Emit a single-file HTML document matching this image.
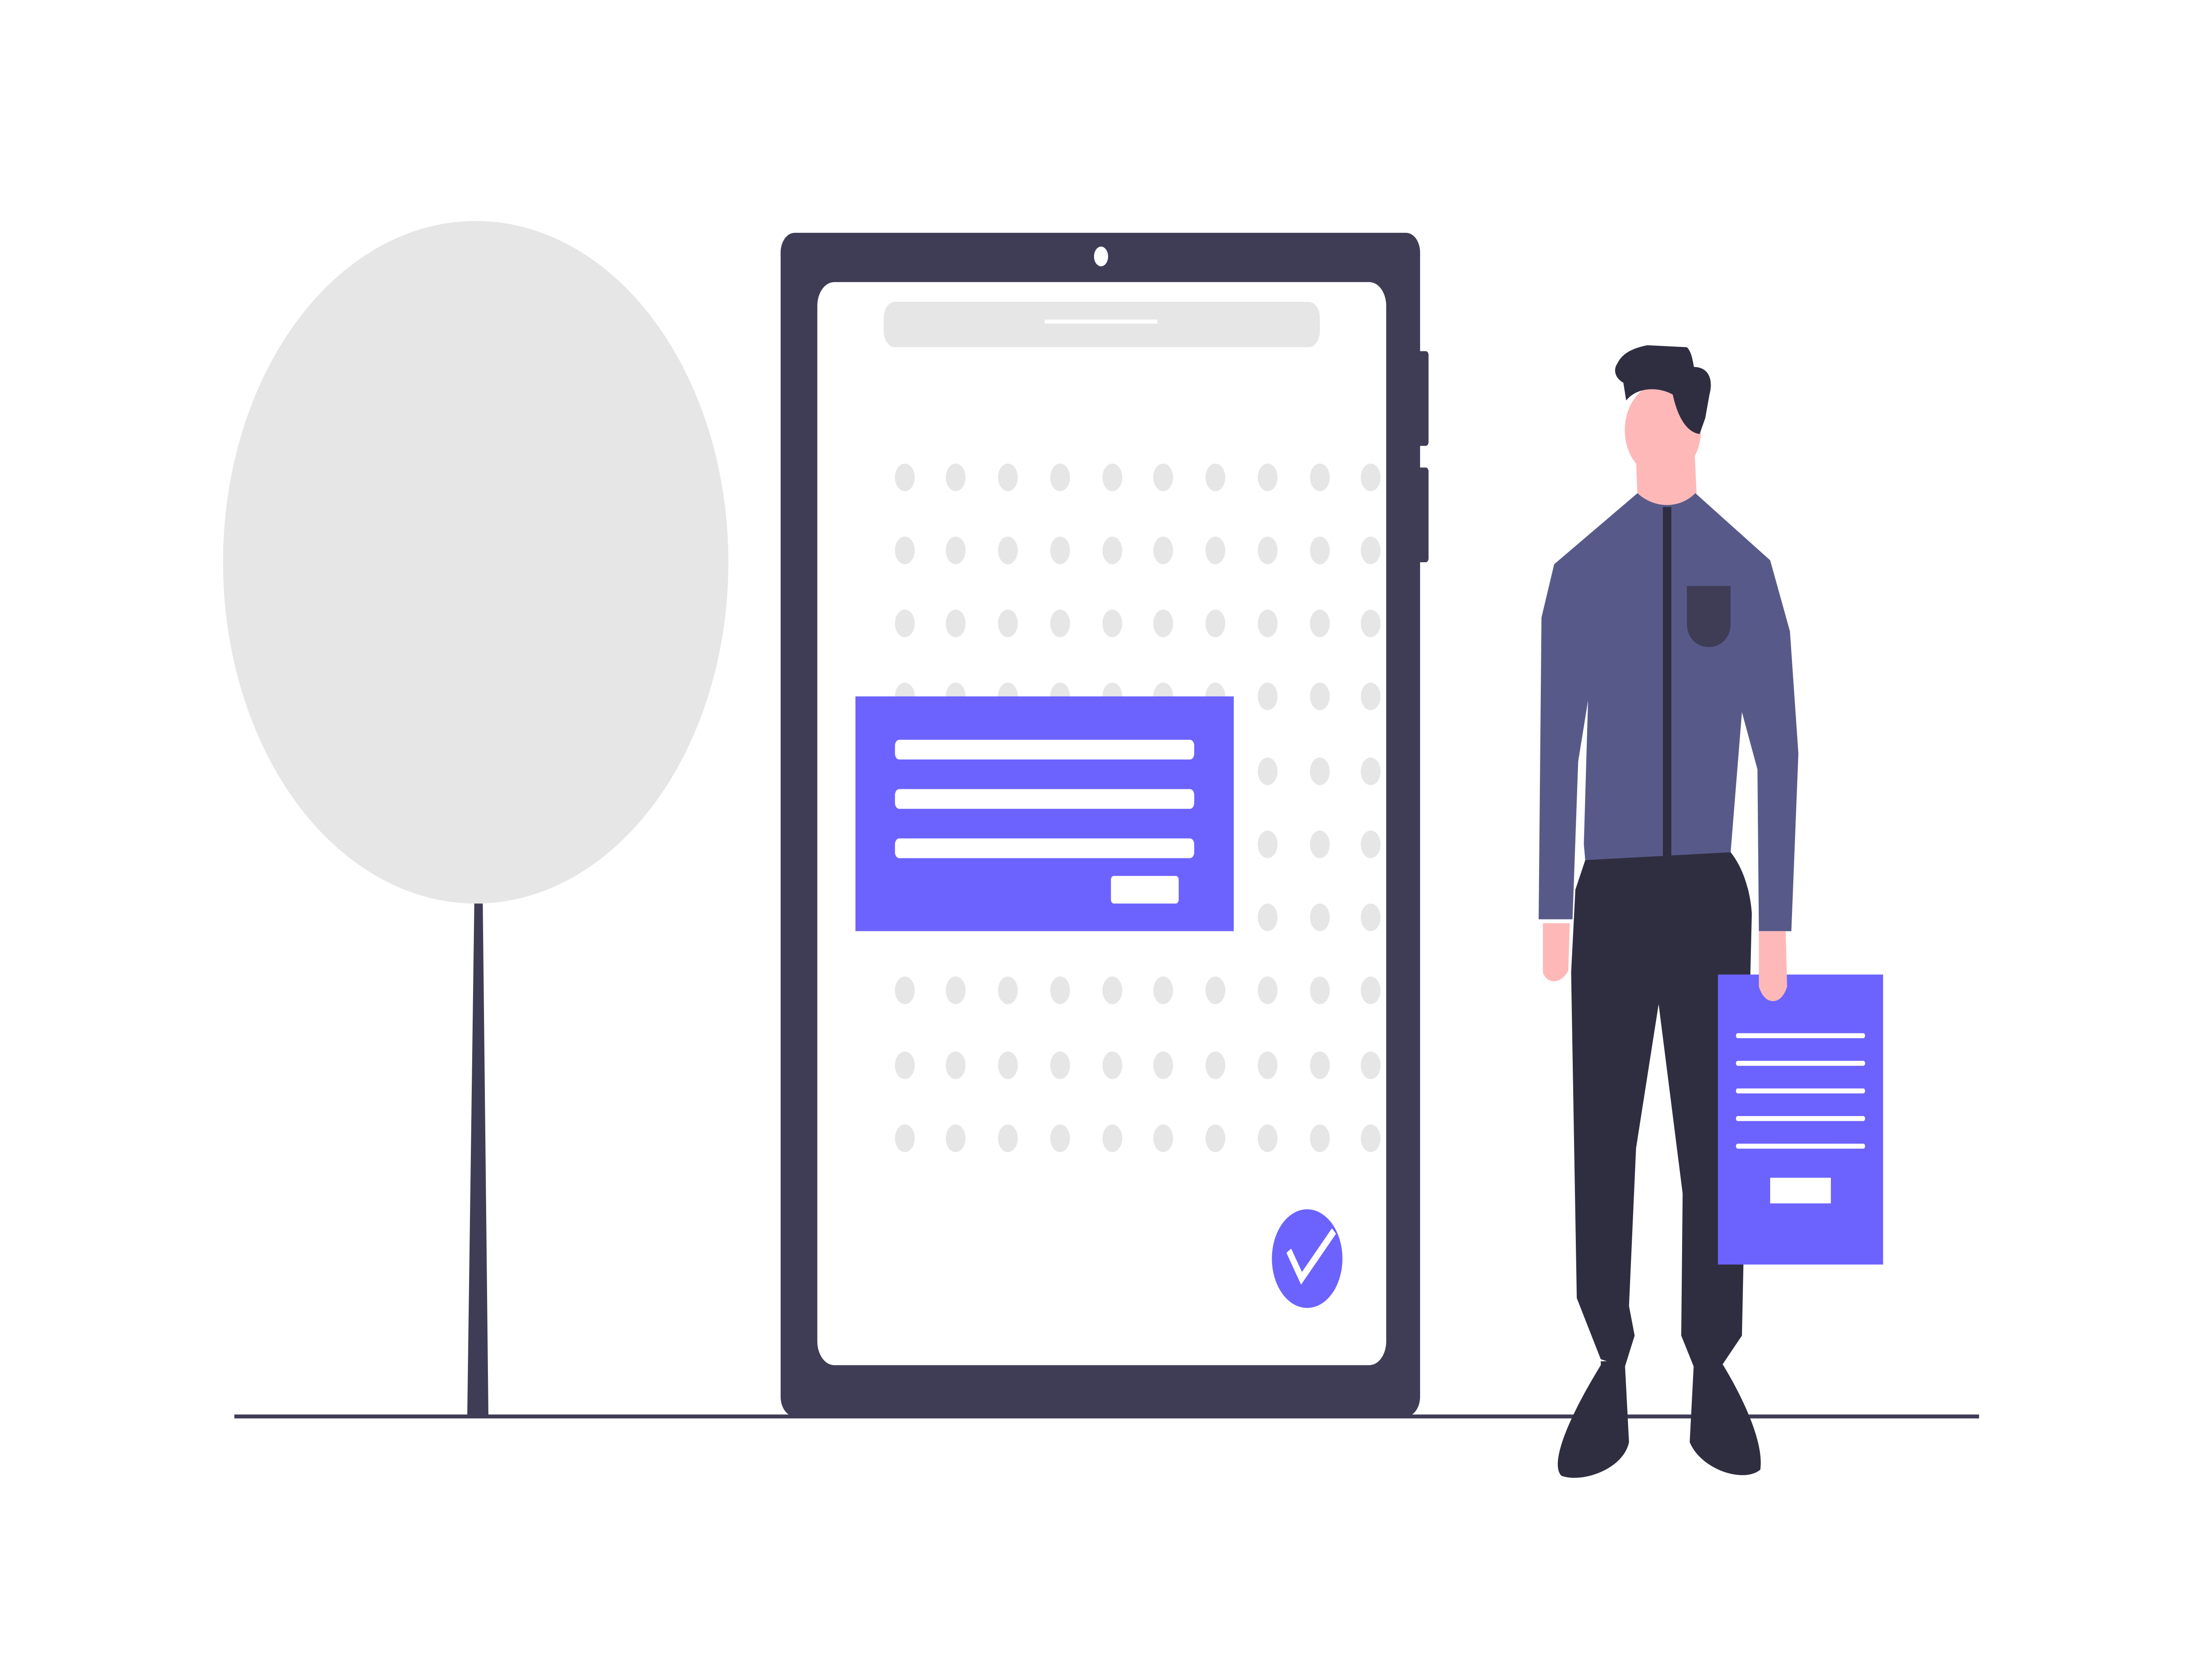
<!DOCTYPE html>
<html><head><meta charset="utf-8"><style>
html,body{margin:0;padding:0;background:#fff;overflow:hidden;width:100%;height:100%}
svg{display:block;width:100vw;height:100vh}
</style></head><body>
<svg viewBox="0 0 1550 851.6" preserveAspectRatio="none" xmlns="http://www.w3.org/2000/svg">
<defs>
<g id="r"><circle cx="641" r="7"/><circle cx="677" r="7"/><circle cx="714" r="7"/><circle cx="751" r="7"/><circle cx="788" r="7"/><circle cx="824" r="7"/><circle cx="861" r="7"/><circle cx="898" r="7"/><circle cx="935" r="7"/><circle cx="971" r="7"/></g>
</defs>
<rect width="1550" height="851.6" fill="#fff"/>
<line x1="166" y1="718" x2="1402" y2="718" stroke="#3f3d56" stroke-width="2"/>
<ellipse cx="337" cy="285" rx="179" ry="173" fill="#e6e6e6"/>
<polygon points="336,458 342,458 346,718 331,718" fill="#3f3d56"/>
<rect x="1003" y="178" width="9" height="48" rx="2" fill="#3f3d56"/>
<rect x="1003" y="237" width="9" height="48" rx="2" fill="#3f3d56"/>
<rect x="553" y="118" width="453" height="600" rx="10" fill="#3f3d56"/>
<rect x="579" y="143" width="403" height="549" rx="12" fill="#fff"/>
<circle cx="780" cy="130" r="5" fill="#fff"/>
<rect x="626" y="153" width="309" height="23" rx="8" fill="#e6e6e6"/>
<line x1="740" y1="163" x2="820" y2="163" stroke="#fff" stroke-width="2"/>
<g fill="#e6e6e6">
<use href="#r" y="242"/><use href="#r" y="279"/><use href="#r" y="316"/><use href="#r" y="353"/><use href="#r" y="391"/><use href="#r" y="428"/><use href="#r" y="465"/><use href="#r" y="502"/><use href="#r" y="540"/><use href="#r" y="577"/>
</g>
<rect x="606" y="353" width="268" height="119" fill="#6c63ff"/>
<g fill="#fff">
<rect x="634" y="375" width="212" height="10" rx="3"/>
<rect x="634" y="400" width="212" height="10" rx="3"/>
<rect x="634" y="425" width="212" height="10" rx="3"/>
<rect x="787" y="444" width="48" height="14" rx="2"/>
</g>
<circle cx="926" cy="638" r="25" fill="#6c63ff"/>
<polyline points="913,634 922,648 945,624" fill="none" stroke="#fff" stroke-width="4"/>
<!-- man -->
<path d="M1158,215 L1160,252 C1175,262 1190,262 1202,252 L1200,222 Z" fill="#ffb8b8"/>
<ellipse cx="1178" cy="218" rx="27" ry="24" fill="#ffb8b8"/>
<path d="M1146,184 C1150,178 1160,176 1167,175 L1195,176 C1198,178 1199,182 1200,186 C1210,186 1214,192 1211,200 L1208,212 L1204,220 C1194,219 1188,210 1185,200 C1175,196 1160,196 1152,203 L1150,194 C1145,192 1142,188 1146,184 Z" fill="#2f2e41"/>
<path d="M1101,286 L1160,250 C1172,258 1190,258 1201,250 L1254,284 L1268,320 L1274,382 L1269,472 L1246,472 L1245,390 L1234,361 L1226,432 L1180,435 L1123,436 L1122,428 L1125,355 L1118,386 L1114,466 L1090,466 L1092,313 Z" fill="#575a89"/>
<path d="M1195,297 L1226,297 L1226,316 C1226,332 1195,332 1195,316 Z" fill="#3f3d56"/>
<rect x="1178" y="257" width="6" height="178" fill="#2f2e41"/>
<path d="M1093,468 L1112,468 L1111,492 C1106,499 1096,499 1093,493 Z" fill="#ffb8b8"/>
<path d="M1123,436 L1226,432 C1235,440 1240,452 1241,463 L1235,643 L1234,677 L1219,693 L1200,693 L1191,677 L1192,605 L1175,509 L1159,582 L1154,662 L1158,677 L1151,693 L1134,689 L1117,658 L1113,493 L1116,451 Z" fill="#2f2e41"/>
<path d="M1134,690 L1151,690 L1154,731 C1150,745 1120,752 1106,748 C1098,742 1110,720 1134,692 Z" fill="#2f2e41"/>
<path d="M1200,690 L1219,690 C1232,705 1250,730 1247,745 C1235,752 1205,745 1197,731 Z" fill="#2f2e41"/>
<rect x="1217" y="494" width="117" height="147" fill="#6c63ff"/>
<g stroke="#fff" stroke-width="2.5" stroke-linecap="round">
<line x1="1231" y1="525" x2="1320" y2="525"/><line x1="1231" y1="539" x2="1320" y2="539"/><line x1="1231" y1="553" x2="1320" y2="553"/><line x1="1231" y1="567" x2="1320" y2="567"/><line x1="1231" y1="581" x2="1320" y2="581"/>
</g>
<rect x="1254" y="597" width="43" height="13" fill="#fff"/>
<path d="M1246,472 L1265,472 L1266,500 C1262,510 1250,510 1246,500 Z" fill="#ffb8b8"/>
</svg>
</body></html>
